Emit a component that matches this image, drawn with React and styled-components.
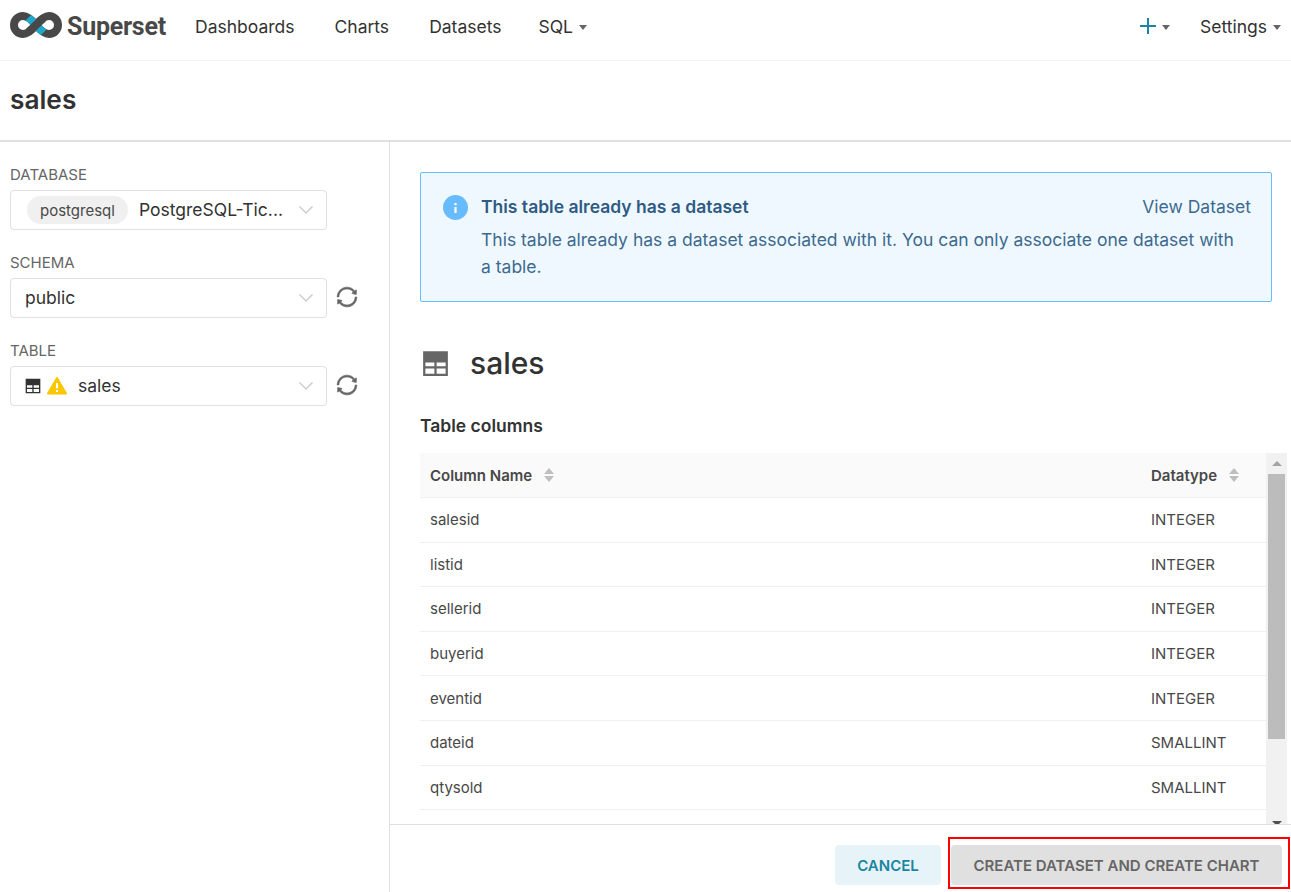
import styled, { createGlobalStyle } from 'styled-components'
import { AiOutlineSync } from 'react-icons/ai'

const GlobalStyle = createGlobalStyle`
  html, body {
    margin: 0;
    padding: 0;
    height: 100%;
    background: #fff;
    overflow: hidden;
  }
  * {
    box-sizing: border-box;
  }
  body {
    font-family: Inter, "Noto Sans", sans-serif;
    color: #323232;
  }
`

const Page = styled.div`
  display: flex;
  flex-direction: column;
  height: 892px;
  overflow: hidden;
`

const Nav = styled.nav`
  display: flex;
  align-items: center;
  height: 61px;
  flex-shrink: 0;
  padding: 0 10px 8px;
  border-bottom: 1px solid #f3f3f3;
`

const Brand = styled.div`
  display: flex;
  align-items: center;
  gap: 5px;
  width: 185px;
  svg {
    margin-bottom: 2px;
  }
`

const BrandName = styled.span`
  font-family: Roboto, sans-serif;
  font-size: 25px;
  font-weight: 700;
  color: #484848;
  letter-spacing: -0.25px;
`

const NavLinks = styled.div`
  display: flex;
  align-items: center;
  gap: 40px;
  flex: 1;
`

const NavLink = styled.span`
  display: inline-flex;
  align-items: center;
  gap: 6px;
  font-size: 17.5px;
  color: #323232;
  margin-left: ${(p) => (p.$pull ? '-3px' : '0')};
`

const NavRight = styled.div`
  display: flex;
  align-items: center;
  gap: 30px;
`

const Caret = styled.span`
  display: inline-block;
  width: 0;
  height: 0;
  margin-top: 2px;
  border-left: 4px solid transparent;
  border-right: 4px solid transparent;
  border-top: 5px solid #666;
`

const Plus = styled.span`
  display: inline-block;
  position: relative;
  width: 16px;
  height: 16px;
  &::before,
  &::after {
    content: '';
    position: absolute;
    background: #1a85a0;
  }
  &::before {
    left: 0;
    right: 0;
    top: 7px;
    height: 2px;
  }
  &::after {
    top: 0;
    bottom: 0;
    left: 7px;
    width: 2px;
  }
`

const TitleBar = styled.header`
  display: flex;
  align-items: center;
  height: 81px;
  flex-shrink: 0;
  padding: 0 10px 2px;
  border-bottom: 2px solid #e0e0e0;
`

const PageTitle = styled.h1`
  margin: 0;
  font-size: 26.25px;
  font-weight: 600;
  color: #323232;
`

const Body = styled.div`
  display: flex;
  flex: 1;
  min-height: 0;
`

const Sidebar = styled.aside`
  display: flex;
  flex-direction: column;
  gap: 23px;
  width: 390px;
  flex-shrink: 0;
  padding: 23px 10px 0;
  border-right: 1px solid #e0e0e0;
`

const Field = styled.div`
  display: flex;
  flex-direction: column;
  gap: 6px;
`

const FieldLabel = styled.label`
  font-size: 15px;
  line-height: 19px;
  color: #666;
  text-transform: uppercase;
`

const FieldRow = styled.div`
  display: flex;
  align-items: center;
  gap: 8px;
`

const Select = styled.div`
  display: flex;
  align-items: center;
  width: 317px;
  height: 40px;
  padding: 0 13px 0 14px;
  border: 1px solid #e0e0e0;
  border-radius: 4px;
  font-size: 17.5px;
  color: #323232;
`

const SelectValue = styled.span`
  flex: 1;
  display: flex;
  align-items: center;
  min-width: 0;
  padding-bottom: 2px;
  white-space: nowrap;
`

const DbTag = styled.span`
  display: inline-block;
  margin: 2px 11px 0 2px;
  padding: 0 13px;
  height: 28px;
  line-height: 29px;
  border-radius: 14px;
  background: #f0f0f0;
  font-size: 15px;
  color: #484848;
`

const TableIcons = styled.span`
  display: inline-flex;
  align-items: center;
  gap: 6px;
  margin: 2px 11px 0 0;
`

const RefreshButton = styled.span`
  display: inline-flex;
  margin-bottom: 2px;
  color: #666;
  font-size: 24px;
  svg path {
    stroke: currentColor;
    stroke-width: 28px;
  }
`

const Main = styled.main`
  display: flex;
  flex-direction: column;
  flex: 1;
  min-width: 0;
`

const Content = styled.div`
  flex: 1;
  min-height: 0;
  overflow: hidden;
  padding: 30px 0 0 30px;
`

const Alert = styled.div`
  display: flex;
  width: 852px;
  height: 130px;
  padding: 20px 20px 0 22px;
  background: #eff8ff;
  border: 1px solid #66bcfe;
  border-radius: 2px;
`

const AlertBody = styled.div`
  flex: 1;
  margin-left: 13px;
  color: #3d6a8f;
  font-size: 17.5px;
`

const AlertHead = styled.div`
  display: flex;
  justify-content: space-between;
  margin-top: 1px;
  line-height: 26px;
`

const AlertTitle = styled.strong`
  font-weight: 600;
  color: #2f5b82;
`

const AlertAction = styled.span`
  color: #3d6a8f;
`

const AlertText = styled.p`
  max-width: 760px;
  margin: 6px 0 0;
  line-height: 27px;
`

const DatasetHead = styled.div`
  display: flex;
  align-items: center;
  gap: 21px;
  margin-top: 42px;
  padding-left: 2px;
  height: 38px;
`

const DatasetName = styled.h2`
  margin: 0;
  font-size: 30px;
  font-weight: 500;
  color: #323232;
`

const SectionTitle = styled.h3`
  margin: 32px 0 0;
  font-size: 17.5px;
  line-height: 24px;
  font-weight: 600;
  color: #323232;
`

const TableWrap = styled.div`
  display: flex;
  width: 867px;
  height: 400px;
  margin-top: 15px;
`

const Rows = styled.div`
  width: 846px;
`

const HeadRow = styled.div`
  display: flex;
  align-items: center;
  height: 45px;
  padding-left: 10px;
  background: #fafafa;
  border-bottom: 1px solid #f0f0f0;
  font-size: 15px;
  font-weight: 600;
  color: #484848;
`

const DataRow = styled.div`
  display: flex;
  align-items: center;
  height: 44.6px;
  padding-left: 10px;
  border-bottom: 1px solid #f0f0f0;
  font-size: 15px;
  color: #484848;
`

const NameCell = styled.span`
  display: flex;
  align-items: center;
  gap: 12px;
  width: 721px;
`

const TypeCell = styled.span`
  display: flex;
  align-items: center;
  gap: 12px;
`

const SortIcon = styled.span`
  display: inline-flex;
  flex-direction: column;
  gap: 2px;
  &::before,
  &::after {
    content: '';
    width: 0;
    height: 0;
    border-left: 5.5px solid transparent;
    border-right: 5.5px solid transparent;
  }
  &::before {
    border-bottom: 6px solid #bfbfbf;
  }
  &::after {
    border-top: 6px solid #bfbfbf;
  }
`

const Scrollbar = styled.div`
  display: flex;
  flex-direction: column;
  align-items: center;
  width: 21px;
  height: 373px;
  background: #f1f1f1;
`

const ScrollArrow = styled.span`
  width: 0;
  height: 0;
  margin: 8px 0 8px;
  border-left: 5px solid transparent;
  border-right: 5px solid transparent;
  border-bottom: 5px solid #a3a3a3;
`

const ScrollThumb = styled.div`
  width: 17px;
  height: 265px;
  background: #bcbcbc;
`

const ScrollArrowDown = styled.span`
  width: 0;
  height: 0;
  margin-top: auto;
  border-left: 5px solid transparent;
  border-right: 5px solid transparent;
  border-top: 5px solid #505050;
`

const Footer = styled.footer`
  display: flex;
  align-items: flex-start;
  justify-content: flex-end;
  flex-shrink: 0;
  gap: 7px;
  height: 68px;
  padding: 12px 1px 0 0;
  border-top: 1px solid #e0e0e0;
`

const Button = styled.button`
  height: 40px;
  border: 0;
  border-radius: 4px;
  font-family: inherit;
  font-size: 15px;
  font-weight: 600;
  text-transform: uppercase;
  background: ${(p) => (p.$primary ? '#e0e0e0' : '#e6f4f9')};
  color: ${(p) => (p.$primary ? '#666' : '#1a85a0')};
  width: ${(p) => (p.$primary ? '331px' : '106px')};
  margin-top: ${(p) => (p.$primary ? '0' : '8px')};
`

const Highlight = styled.div`
  width: 342px;
  height: 52px;
  padding: 6px 0 0 1px;
  border: 2px solid #f00;
`

function Logo() {
  return (
    <svg width="52" height="26" viewBox="0 0 52 26" fill="none">
      <path
        d="M26 13 C22 8 18 4 13 4 C8 4 4 8 4 13 C4 18 8 22 13 22 C18 22 22 18 26 13 C30 8 34 4 39 4 C44 4 48 8 48 13 C48 18 44 22 39 22 C34 22 30 18 26 13 Z"
        stroke="#484848"
        strokeWidth="8"
      />
      <path d="M18.5 5.5 L33.5 20.5" stroke="#20a7c9" strokeWidth="8" />
      <path d="M19 19.5 L33 6.5" stroke="#484848" strokeWidth="8" />
    </svg>
  )
}

function TableGlyph({ size, color }) {
  return (
    <svg width={size} height={size} viewBox="0 0 24 24">
      <path
        fill={color}
        fillRule="evenodd"
        d="M1 1 H23 V23 H1 Z M3 11 V14.5 H11 V11 Z M13 11 V14.5 H21 V11 Z M3 16.5 V21 H11 V16.5 Z M13 16.5 V21 H21 V16.5 Z"
      />
    </svg>
  )
}

function Warning() {
  return (
    <svg width="20" height="18" viewBox="0 0 20 18">
      <path
        d="M10 1 L19 16.5 H1 Z"
        fill="#fbc700"
        stroke="#fbc700"
        strokeWidth="2"
        strokeLinejoin="round"
      />
      <path d="M9 6 H11 V11.5 H9 Z M9 13 H11 V15 H9 Z" fill="#fff" />
    </svg>
  )
}

function Chevron() {
  return (
    <svg width="14" height="8" viewBox="0 0 14 8" fill="none">
      <path d="M0.5 0.5 L7 7 L13.5 0.5" stroke="#c4c4c4" strokeWidth="1.2" />
    </svg>
  )
}

function InfoIcon() {
  return (
    <svg width="25" height="25" viewBox="0 0 25 25" style={{ flexShrink: 0, marginTop: 2 }}>
      <circle cx="12.5" cy="12.5" r="12.5" fill="#66bcfe" />
      <path d="M11.4 8 H13.6 V10.2 H11.4 Z M11.4 12 H13.6 V18 H11.4 Z" fill="#fff" />
    </svg>
  )
}

const columns = [
  ['salesid', 'INTEGER'],
  ['listid', 'INTEGER'],
  ['sellerid', 'INTEGER'],
  ['buyerid', 'INTEGER'],
  ['eventid', 'INTEGER'],
  ['dateid', 'SMALLINT'],
  ['qtysold', 'SMALLINT'],
]

export default function App() {
  return (
    <Page>
      <GlobalStyle />
      <Nav>
        <Brand>
          <Logo />
          <BrandName>Superset</BrandName>
        </Brand>
        <NavLinks>
          <NavLink>Dashboards</NavLink>
          <NavLink>Charts</NavLink>
          <NavLink>Datasets</NavLink>
          <NavLink $pull>
            SQL <Caret />
          </NavLink>
        </NavLinks>
        <NavRight>
          <NavLink>
            <Plus /> <Caret />
          </NavLink>
          <NavLink>
            Settings <Caret />
          </NavLink>
        </NavRight>
      </Nav>
      <TitleBar>
        <PageTitle>sales</PageTitle>
      </TitleBar>
      <Body>
        <Sidebar>
          <Field>
            <FieldLabel>Database</FieldLabel>
            <Select>
              <SelectValue>
                <DbTag>postgresql</DbTag>
                PostgreSQL-Tic...
              </SelectValue>
              <Chevron />
            </Select>
          </Field>
          <Field>
            <FieldLabel>Schema</FieldLabel>
            <FieldRow>
              <Select>
                <SelectValue>public</SelectValue>
                <Chevron />
              </Select>
              <RefreshButton>
                <AiOutlineSync />
              </RefreshButton>
            </FieldRow>
          </Field>
          <Field>
            <FieldLabel>Table</FieldLabel>
            <FieldRow>
              <Select>
                <SelectValue>
                  <TableIcons>
                    <TableGlyph size={16} color="#323232" />
                    <Warning />
                  </TableIcons>
                  sales
                </SelectValue>
                <Chevron />
              </Select>
              <RefreshButton>
                <AiOutlineSync />
              </RefreshButton>
            </FieldRow>
          </Field>
        </Sidebar>
        <Main>
          <Content>
            <Alert>
              <InfoIcon />
              <AlertBody>
                <AlertHead>
                  <AlertTitle>This table already has a dataset</AlertTitle>
                  <AlertAction>View Dataset</AlertAction>
                </AlertHead>
                <AlertText>
                  This table already has a dataset associated with it. You can only associate one
                  dataset with a table.
                </AlertText>
              </AlertBody>
            </Alert>
            <DatasetHead>
              <TableGlyph size={27} color="#666" />
              <DatasetName>sales</DatasetName>
            </DatasetHead>
            <SectionTitle>Table columns</SectionTitle>
            <TableWrap>
              <Rows>
                <HeadRow>
                  <NameCell>
                    Column Name <SortIcon />
                  </NameCell>
                  <TypeCell>
                    Datatype <SortIcon />
                  </TypeCell>
                </HeadRow>
                {columns.map(([name, type]) => (
                  <DataRow key={name}>
                    <NameCell>{name}</NameCell>
                    <TypeCell>{type}</TypeCell>
                  </DataRow>
                ))}
              </Rows>
              <Scrollbar>
                <ScrollArrow />
                <ScrollThumb />
                <ScrollArrowDown />
              </Scrollbar>
            </TableWrap>
          </Content>
          <Footer>
            <Button>Cancel</Button>
            <Highlight>
              <Button $primary>Create dataset and create chart</Button>
            </Highlight>
          </Footer>
        </Main>
      </Body>
    </Page>
  )
}
